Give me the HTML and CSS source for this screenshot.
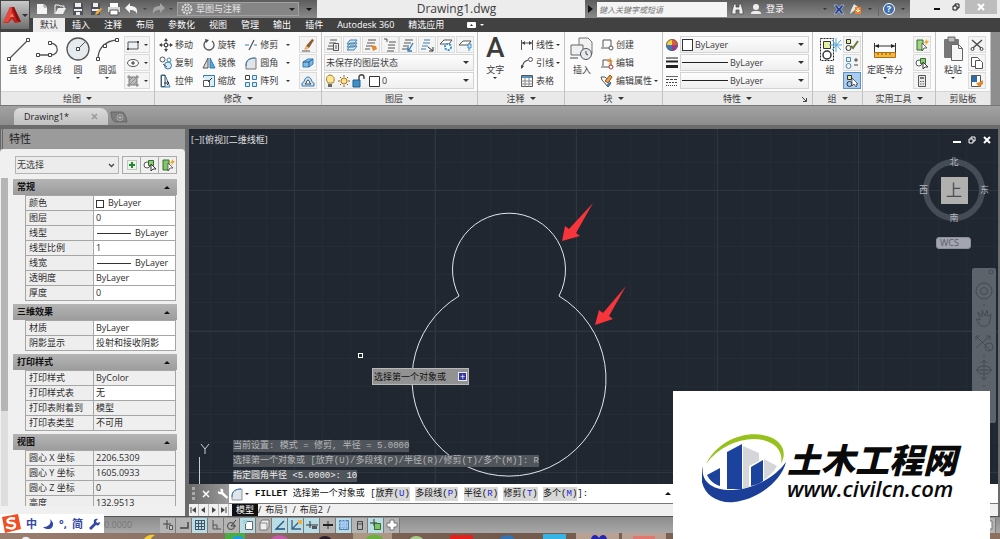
FILE: index.html
```html
<!DOCTYPE html>
<html lang="zh-CN">
<head>
    <meta charset="UTF-8">
    <meta name="viewport" content="width=device-width, initial-scale=1.0">
    <title>Drawing1.dwg</title>
    <link rel="stylesheet" href="styles.css">
</head>
<body>
    <div class="app">
        <header class="header">
            <button class="app-btn" aria-label="应用程序菜单">
                <svg width="20" height="20" viewBox="0 0 20 20"><path d="M1 18L8 2h4l7 15-6 1-3-4-4 4z" fill="#c4211c"/><path d="M8 2L1 18l5-1 3-5 1-10z" fill="#e8473c"/><path d="M10 2l2 0 7 15-4-1z" fill="#8c1210"/><path d="M10 8l2 4H8z" fill="#f08070"/></svg>
                <i class="caret"></i>
            </button>
            <div class="titlebar">
                <div class="quick-access">
                    <button aria-label="新建"><svg width="14" height="14" viewBox="0 0 14 14"><path d="M2 2h7l3 3v7H2z" fill="#f4f4f4"/><path d="M9 2v3h3" fill="none" stroke="#888"/></svg></button>
                    <button aria-label="打开"><svg width="14" height="14" viewBox="0 0 14 14"><path d="M2 12V3h4l1 1h4v2" fill="none" stroke="#f4f4f4"/><path d="M2 12l3-6h8l-3 6z" fill="#eee"/></svg></button>
                    <button aria-label="保存"><svg width="14" height="14" viewBox="0 0 14 14"><path d="M2 1h10v12H2z" fill="#4d5259"/><path d="M4 1h6v4H4zM3 7h8v2H3zM5 10h4v3H5z" fill="#eee"/></svg></button>
                    <button aria-label="另存为"><svg width="14" height="14" viewBox="0 0 14 14"><path d="M2 1h9v12H2z" fill="#4d5259"/><path d="M4 1h5v4H4zM3 7h7v2H3z" fill="#eee"/><path d="M6 13l1-3 5-4 1 1-4 5z" fill="#f1a93b"/></svg></button>
                    <button aria-label="打印"><svg width="14" height="14" viewBox="0 0 14 14"><path d="M3 1h8v4H3z" fill="#fff"/><path d="M1 5h12v5H1z" fill="#d8d8d8"/><path d="M3 8h8v5H3z" fill="#fff" stroke="#555"/></svg></button>
                    <button aria-label="放弃"><svg width="14" height="14" viewBox="0 0 14 14"><path d="M5 1v3c5 0 8 2 7 8-1-3-3-4-7-4v3L0 6z" fill="#f4f4f4"/></svg></button>
                    <i class="caret dim"></i>
                    <button aria-label="重做"><svg width="14" height="14" viewBox="0 0 14 14"><path d="M9 1v3C4 4 1 6 2 12c1-3 3-4 7-4v3l5-5z" fill="#a4a4a4"/></svg></button>
                    <i class="caret dim"></i>
                    <label class="workspace">
                        <svg width="12" height="12" viewBox="0 0 12 12"><circle cx="6" cy="6" r="4.5" fill="none" stroke="#ddd" stroke-width="2" stroke-dasharray="2 1"/><circle cx="6" cy="6" r="2" fill="none" stroke="#eee"/></svg>
                        <select aria-label="工作空间"><option>草图与注释</option></select>
                        <i class="caret"></i>
                    </label>
                    <i class="caret black"></i>
                </div>
                <h1 class="doc-title">Drawing1.dwg</h1>
                <div class="infocenter">
                    <i class="arrow-right"></i>
                    <input type="text" placeholder="键入关键字或短语" aria-label="搜索">
                    <button aria-label="查找"><svg width="13" height="12" viewBox="0 0 13 12"><path d="M3 1h2v3h3V1h2l2 7v3H8V7H5v4H1V8z" fill="#eee" stroke="#444" stroke-width=".7"/></svg></button>
                    <button class="login"><svg width="12" height="12" viewBox="0 0 12 12"><circle cx="6" cy="4" r="3" fill="#eee"/><path d="M1 11c0-3 2-3 5-3s5 0 5 3z" fill="#eee"/></svg>登录</button>
                    <span class="spacer"></span>
                    <i class="caret"></i>
                    <button aria-label="Exchange"><svg width="12" height="11" viewBox="0 0 12 11"><path d="M1 1h3l2 3 2-3h3L8 5.500l3 4.500H8L6 7l-2 3H1l3-4.500z" fill="#27408f" stroke="#c8d4f2" stroke-width=".6"/></svg></button>
                    <button aria-label="脱机"><svg width="13" height="12" viewBox="0 0 13 12"><path d="M5 1l4 3-3 3-5 4 1-4z" fill="#e4e4e4"/><rect x="6" y="4" width="6" height="7" fill="#f07f22"/><path d="M9 5v4M7 7l2 2 2-2" stroke="#fff" fill="none"/></svg></button>
                    <i class="caret"></i>
                    <span class="sep"></span>
                    <button class="help" aria-label="帮助">?</button>
                    <i class="caret"></i>
                </div>
                <div class="window-controls">
                    <button aria-label="最小化"><svg width="8" height="8" viewBox="0 0 8 8"><path d="M1 6h6" stroke="#111" stroke-width="2"/></svg></button>
                    <button aria-label="还原"><svg width="8" height="8" viewBox="0 0 8 8"><path d="M1 3h4v4H1zM3 3V1h4v4H5" fill="none" stroke="#111"/></svg></button>
                    <button class="close" aria-label="关闭"><svg width="8" height="8" viewBox="0 0 8 8"><path d="M1 1l6 6M7 1L1 7" stroke="#fff" stroke-width="2"/></svg></button>
                </div>
            </div>
            <nav class="ribbon-tabs">
                <a href="#" class="active">默认</a>
                <a href="#">插入</a>
                <a href="#">注释</a>
                <a href="#">布局</a>
                <a href="#">参数化</a>
                <a href="#">视图</a>
                <a href="#">管理</a>
                <a href="#">输出</a>
                <a href="#">插件</a>
                <a href="#">Autodesk 360</a>
                <a href="#">精选应用</a>
                <button class="minimize-ribbon" aria-label="最小化功能区"><svg width="9" height="6" viewBox="0 0 9 6"><rect width="9" height="6" rx="1" fill="#fff"/><path d="M3 4l1.500-2L6 4z" fill="#333"/></svg><i class="caret light"></i></button>
            </nav>
        </header>

        <section class="ribbon">
            <div class="panel draw">
                <div class="panel-body">
                    <button class="big"><svg width="26" height="26" viewBox="0 0 26 26"><path d="M4 23L23 4" stroke="#555" stroke-width="1.300"/><path d="M2.500 21.500h3v3h-3zM21.500 2.500h3v3h-3z" fill="#fff" stroke="#444"/></svg>直线</button>
                    <button class="big"><svg width="26" height="26" viewBox="0 0 26 26"><path d="M3 19h13c8 0 9-11-1-12" fill="none" stroke="#555" stroke-width="1.300"/><path d="M1.500 17.500h3v3h-3zM13.500 17.500h3v3h-3zM13.500 5.500h3v3h-3z" fill="#fff" stroke="#444"/></svg>多段线</button>
                    <button class="big"><svg width="26" height="26" viewBox="0 0 26 26"><circle cx="13" cy="13" r="11" fill="#e4eaee" stroke="#555" stroke-width="1.300"/><path d="M13 13l7-7" stroke="#555"/><path d="M11.500 11.500h3v3h-3z" fill="#fff" stroke="#444"/></svg>圆<i class="caret"></i></button>
                    <button class="big"><svg width="26" height="26" viewBox="0 0 26 26"><path d="M4 23C4 12 11 5 23 4" fill="none" stroke="#555" stroke-width="1.300"/><path d="M2.500 21.500h3v3h-3zM9.500 8.500h3v3h-3zM21.500 2.500h3v3h-3z" fill="#fff" stroke="#444"/></svg>圆弧<i class="caret"></i></button>
                    <div class="stack">
                        <button class="boxed" aria-label="矩形"><svg width="14" height="14" viewBox="0 0 14 14"><path d="M2 4h10v7H2z" fill="#eef1f3" stroke="#555"/><path d="M1 10h2v2H1zM11 3h2v2h-2z" fill="#444"/></svg><i class="caret"></i></button>
                        <button class="boxed" aria-label="椭圆"><svg width="14" height="14" viewBox="0 0 14 14"><ellipse cx="7" cy="7" rx="5.500" ry="3.500" fill="#fff" stroke="#555"/><path d="M7 5v4M5 7h4" stroke="#333"/></svg><i class="caret"></i></button>
                        <button class="boxed" aria-label="图案填充"><svg width="14" height="14" viewBox="0 0 14 14"><path d="M3 3h8v8H3z" fill="#bbb"/><path d="M3 1v12M11 1v12M1 3h12M1 11h12" stroke="#666" stroke-width=".8"/><path d="M3 7l4-4M3 11l8-8M7 11l4-4" stroke="#888" stroke-width=".8"/></svg><i class="caret"></i></button>
                    </div>
                </div>
                <h2 class="panel-title">绘图<i class="caret"></i></h2>
            </div>

            <div class="panel modify">
                <div class="panel-body">
                    <div class="stack">
                        <button><svg width="14" height="14" viewBox="0 0 14 14"><path d="M7 1v12M1 7h12" stroke="#555"/><path d="M7 0l2 3H5zM7 14l2-3H5zM0 7l3-2v4zM14 7l-3-2v4z" fill="#444"/><path d="M5.500 5.500h3v3h-3z" fill="#fff" stroke="#444"/></svg>移动</button>
                        <button><svg width="14" height="14" viewBox="0 0 14 14"><circle cx="3.500" cy="3.500" r="2.500" fill="none" stroke="#555"/><circle cx="10" cy="4" r="2" fill="none" stroke="#3f86bb"/><circle cx="9" cy="9.500" r="3.500" fill="#dcecf7" stroke="#2f7cb6"/><path d="M4 8l4 3" stroke="#444"/></svg>复制</button>
                        <button><svg width="14" height="14" viewBox="0 0 14 14"><path d="M2 1h4l5 12H2z" fill="#d8ebf7" stroke="#2f7cb6"/><path d="M2.500 1.500H6v11H2.500z" fill="#fff" stroke="#555"/><path d="M5 9h4M8 7l2 2-2 2" stroke="#333" fill="none"/></svg>拉伸</button>
                    </div>
                    <div class="stack">
                        <button><svg width="14" height="14" viewBox="0 0 14 14"><path d="M4 3a5 5 0 1 0 6 0" fill="none" stroke="#555" stroke-width="1.300"/><path d="M3 1l4 1-3 3z" fill="#444"/></svg>旋转</button>
                        <button><svg width="14" height="14" viewBox="0 0 14 14"><path d="M6 2v10H1z" fill="#ddd" stroke="#555"/><path d="M8 2v10h5z" fill="#5ca5d6" stroke="#2f7cb6"/></svg>镜像</button>
                        <button><svg width="14" height="14" viewBox="0 0 14 14"><path d="M1.500 3.500v-2h11v11h-4" fill="#dcecf7" stroke="#2f7cb6"/><path d="M1.500 6.500h6v6h-6z" fill="#fff" stroke="#555"/><path d="M6 8l4-4" stroke="#333"/></svg>缩放</button>
                    </div>
                    <div class="stack">
                        <button><svg width="14" height="14" viewBox="0 0 14 14"><path d="M1 7h4M10 7h3" stroke="#2f7cb6"/><path d="M5 12L10 2" stroke="#555" stroke-width="1.300"/></svg>修剪<i class="caret"></i></button>
                        <button><svg width="14" height="14" viewBox="0 0 14 14"><path d="M2 13V9c0-5 3-7 10-7v11z" fill="#dfe5e9" stroke="#777"/><path d="M2 10c0-6 4-8 9-8" fill="none" stroke="#2f7cb6"/></svg>圆角<i class="caret"></i></button>
                        <button><svg width="14" height="14" viewBox="0 0 14 14"><path d="M1.500 1.500h4v4h-4z" fill="#fff" stroke="#444"/><path d="M8.500 1.500h4v4h-4zM1.500 8.500h4v4h-4zM8.500 8.500h4v4h-4z" fill="#dcecf7" stroke="#2f7cb6"/></svg>阵列<i class="caret"></i></button>
                    </div>
                    <div class="stack">
                        <button class="boxed" aria-label="删除"><svg width="14" height="14" viewBox="0 0 14 14"><path d="M5 8l6-7 2 1-5 8z" fill="#8f5a2c"/><path d="M5 8l3 2-3 2-2-1z" fill="#f0b070"/><path d="M1 13h8" stroke="#555"/></svg></button>
                        <button class="boxed" aria-label="分解"><svg width="14" height="14" viewBox="0 0 14 14"><path d="M2 6l5-3h5v5l-4 3H2z" fill="#7fbbe3" stroke="#2f7cb6"/><path d="M2 6h6v5M8 6l4-3" fill="none" stroke="#1d5f96"/></svg></button>
                        <button class="boxed" aria-label="偏移"><svg width="14" height="14" viewBox="0 0 14 14"><path d="M1 12V9c3 0 2-6 6-6s3 6 6 6v3z" fill="#cfe4f3" stroke="#2f7cb6"/><path d="M4 10c2 0 1-4 3-4s1 4 3 4z" fill="#fff" stroke="#444"/></svg></button>
                    </div>
                </div>
                <h2 class="panel-title">修改<i class="caret"></i></h2>
            </div>

            <div class="panel layers">
                <div class="panel-body column">
                    <div class="tool-row">
                        <button class="boxed" aria-label="图层特性"><svg width="14" height="14" viewBox="0 0 14 14"><path d="M4 2h7M3 5h7M2 8h5M1 11h6" stroke="#555"/><path d="M7.500 5.500h5v7h-5z" fill="#eee" stroke="#555"/><path d="M9 8h2M9 10h2" stroke="#555"/></svg></button>
                        <button class="boxed" aria-label="隔离"><svg width="14" height="14" viewBox="0 0 14 14"><path d="M2 6l3-4h7l-3 4zM2 9l3-4h7l-3 4zM2 12l3-4h7l-3 4z" fill="#d7e9f5" stroke="#3c7fae"/></svg></button>
                        <button class="boxed" aria-label="匹配"><svg width="14" height="14" viewBox="0 0 14 14"><path d="M4 2h8M3 5h8M2 8h6M1 11h5" stroke="#555"/><path d="M7 7l5 1 1 3-4 2z" fill="#e08a2c"/></svg></button>
                        <button class="boxed" aria-label="上一个"><svg width="14" height="14" viewBox="0 0 14 14"><path d="M1 1h3v3M6 4h7M5 7h7M5 10h7M4 13h7" fill="none" stroke="#555"/></svg></button>
                        <button class="boxed" aria-label="置为当前"><svg width="14" height="14" viewBox="0 0 14 14"><path d="M4 2h8M3 5h7M2 8h6M1 11h6" stroke="#555"/><path d="M12 5l-4 7M7 9v4h4" fill="none" stroke="#2f7cb6" stroke-width="1.300"/></svg></button>
                        <button class="boxed" aria-label="更改为当前图层"><svg width="14" height="14" viewBox="0 0 14 14"><path d="M4 2h6M3 5h7M2 8h6M1 11h5" stroke="#3c7fae"/><path d="M8 9l5 4M13 9v4H9" fill="none" stroke="#333"/></svg></button>
                        <button class="boxed" aria-label="冻结"><svg width="14" height="14" viewBox="0 0 14 14"><path d="M1 6l4-4h8l-3 4z" fill="#fff" stroke="#555"/><circle cx="9" cy="9" r="3" fill="#fff" stroke="#3c8fc8" stroke-width="2" stroke-dasharray="2 1"/></svg></button>
                        <button class="boxed" aria-label="关闭图层"><svg width="14" height="14" viewBox="0 0 14 14"><path d="M1 7l4-4h8l-3 4z" fill="#fff" stroke="#555"/><path d="M10 6h3v4h-3zM11 10v3" fill="#cfe5f4" stroke="#3c8fc8"/></svg></button>
                    </div>
                    <label class="combo"><select aria-label="图层状态"><option>未保存的图层状态</option></select><i class="caret"></i></label>
                    <label class="combo">
                        <svg width="54" height="14" viewBox="3 0 54 14"><path d="M5 9C2 5 4 1 7 1s6 4 3 8z" fill="#ffe79a" stroke="#a0802c"/><path d="M5 10h4v3H5z" fill="#666"/><circle cx="21" cy="7" r="3" fill="#ffe08a" stroke="#a9771d"/><path d="M21 1v2M21 11v2M15 7h2M25 7h2M17 3l1 1M24 10l1 1M25 3l-1 1M17 11l1-1" stroke="#80602a"/><path d="M30 6h7v7h-7z" fill="#3f8fca" stroke="#20608f"/><path d="M36 6V3c0-3 5-3 5 0v2" fill="none" stroke="#444" stroke-width="1.400"/><path d="M46.500 2.500h10v10h-10z" fill="#fff" stroke="#333"/></svg>
                        <select aria-label="当前图层"><option>0</option></select><i class="caret"></i>
                    </label>
                </div>
                <h2 class="panel-title">图层<i class="caret"></i></h2>
            </div>

            <div class="panel annotate">
                <div class="panel-body">
                    <button class="big"><span class="letter">A</span>文字<i class="caret"></i></button>
                    <div class="stack">
                        <button><svg width="14" height="14" viewBox="0 0 14 14"><path d="M1.500 2v10M12.500 2v10M2 5h10" stroke="#555"/><path d="M2 5l3-2v4zM12 5l-3-2v4z" fill="#444"/></svg>线性<i class="caret"></i></button>
                        <button><svg width="14" height="14" viewBox="0 0 14 14"><path d="M2 12C3 6 5 5 8 4" fill="none" stroke="#555" stroke-width="1.300"/><path d="M1 13V9l3 1z" fill="#444"/><circle cx="10.500" cy="3.500" r="2" fill="#fff" stroke="#555"/></svg>引线<i class="caret"></i></button>
                        <button><svg width="14" height="14" viewBox="0 0 14 14"><path d="M1.500 1.500h11v11h-11z" fill="#fff" stroke="#555"/><path d="M2 2h10v2H2z" fill="#5a93bd"/><path d="M1 7h12M1 10h12M5 4v9M9 4v9" stroke="#888"/></svg>表格</button>
                    </div>
                </div>
                <h2 class="panel-title">注释<i class="caret"></i></h2>
            </div>

            <div class="panel block">
                <div class="panel-body">
                    <button class="big"><svg width="26" height="26" viewBox="0 0 26 26"><path d="M10 2h9l4 4v12H10z" fill="#f2f2f2" stroke="#777"/><path d="M2 9h12v10H2z" fill="#eef0f2" stroke="#666"/><circle cx="17" cy="18" r="5.500" fill="#e3e9ed" stroke="#555"/><path d="M17 18v-3M17 18l2 1M1 22h8" stroke="#444"/></svg>插入</button>
                    <div class="stack">
                        <button><svg width="14" height="14" viewBox="0 0 14 14"><path d="M3 9V2h8v5M1 10h9M11 7v5" fill="none" stroke="#555"/><circle cx="11" cy="10" r="2" fill="#fff" stroke="#555"/></svg>创建</button>
                        <button><svg width="14" height="14" viewBox="0 0 14 14"><path d="M3 10V4h8v6M1 11h8" fill="none" stroke="#555"/><circle cx="11" cy="11" r="2" fill="#fff" stroke="#a33"/><path d="M11 1L7 6h3L8 10l5-5h-3z" fill="#f0912c"/></svg>编辑</button>
                        <button><svg width="14" height="14" viewBox="0 0 14 14"><path d="M1 3h4l6 6-3 4-6-7z" fill="#fff" stroke="#555"/><path d="M5 7l5-6 2 2-4 6z" fill="#e8a04a" stroke="#95551d"/><path d="M7 12l3-3" stroke="#2f7cb6" stroke-width="2"/></svg>编辑属性<i class="caret"></i></button>
                    </div>
                </div>
                <h2 class="panel-title">块<i class="caret"></i></h2>
            </div>

            <div class="panel properties">
                <div class="panel-body column">
                    <div class="prop-row">
                        <svg width="14" height="14" viewBox="0 0 14 14"><path d="M7 7V1a6 6 0 0 1 6 6z" fill="#e35b31"/><path d="M7 7V1a6 6 0 0 0-6 6z" fill="#f4d03c"/><path d="M7 7h6a6 6 0 0 1-6 6z" fill="#a2398f"/><path d="M7 7H1a6 6 0 0 0 6 6z" fill="#3b78b8"/><circle cx="7" cy="7" r="5.500" fill="none" stroke="#666"/></svg>
                        <label class="combo"><span class="swatch"></span><select aria-label="对象颜色"><option>ByLayer</option></select><i class="caret"></i></label>
                    </div>
                    <div class="prop-row">
                        <svg width="14" height="14" viewBox="0 0 14 14"><path d="M1 2h12" stroke="#222"/><path d="M1 5.500h12" stroke="#222" stroke-width="2"/><path d="M1 10.500h12" stroke="#222" stroke-width="3"/></svg>
                        <label class="combo"><span class="line-sample"></span><select aria-label="线宽"><option>ByLayer</option></select><i class="caret"></i></label>
                    </div>
                    <div class="prop-row">
                        <svg width="14" height="14" viewBox="0 0 14 14"><path d="M1 2.500h12" stroke="#666"/><path d="M1 5.500h12" stroke="#444" stroke-dasharray="3 1"/><path d="M1 8.500h12" stroke="#444" stroke-dasharray="2 1"/><path d="M1 11.500h12" stroke="#444" stroke-dasharray="1 1"/></svg>
                        <label class="combo"><span class="line-sample"></span><select aria-label="线型"><option>ByLayer</option></select><i class="caret"></i></label>
                    </div>
                </div>
                <h2 class="panel-title">特性<i class="caret"></i><svg class="launcher" width="5" height="5" viewBox="0 0 5 5"><path d="M0 0l4 4M4.500 1v3.500H1" fill="none" stroke="#444"/></svg></h2>
            </div>

            <div class="panel group">
                <div class="panel-body">
                    <button class="big"><svg width="26" height="26" viewBox="0 0 26 26"><path d="M3.500 2.500h13v22h-13z" fill="none" stroke="#222" stroke-dasharray="2 1"/><path d="M6.500 5.500h7v7h-7z" fill="#e6ef9e" stroke="#333"/><circle cx="10" cy="19" r="4" fill="#fff" stroke="#333" stroke-width="1.500"/><path d="M19 2v14M12 9h13M15 4l9 10M24 4l-9 10" stroke="#55a6dc"/></svg>组</button>
                    <div class="stack">
                        <button class="boxed" aria-label="解除编组"><svg width="14" height="14" viewBox="0 0 14 14"><path d="M1.500 1.500h4v4h-4z" fill="#e6ef9e" stroke="#333"/><circle cx="3.500" cy="10" r="2.500" fill="none" stroke="#333"/><path d="M6 8l2 2 5-7" fill="none" stroke="#6b7a35" stroke-width="2"/></svg></button>
                        <button class="boxed" aria-label="组编辑"><svg width="14" height="14" viewBox="0 0 14 14"><path d="M1.500 1.500h4v4h-4z" fill="#e8f2f9" stroke="#4a87ad"/><circle cx="3.500" cy="10" r="2.500" fill="none" stroke="#4a87ad"/><path d="M9 4h4M11 2v4M9 9h4" stroke="#444"/></svg></button>
                        <button class="boxed pressed" aria-label="启用组选择"><svg width="14" height="14" viewBox="0 0 14 14"><path d="M2.500 1.500h4v4h-4z" fill="#e6ef9e" stroke="#333"/><circle cx="4.500" cy="10" r="2.500" fill="none" stroke="#333"/><path d="M7 4v8l2-2 2 3 1-1-1-2h2z" fill="#fff" stroke="#333" stroke-width=".7"/></svg></button>
                    </div>
                </div>
                <h2 class="panel-title">组<i class="caret"></i></h2>
            </div>

            <div class="panel utilities">
                <div class="panel-body">
                    <button class="big"><svg width="26" height="26" viewBox="0 0 26 26"><path d="M2.500 7v10M23.500 7v10M3 10h20" stroke="#333"/><path d="M3 10l4-2v4zM23 10l-4-2v4z" fill="#222"/><path d="M2.500 16.500h21v5h-21z" fill="#f4b73c" stroke="#a86f16"/><path d="M6 17v2M10 17v2M14 17v2M18 17v2" stroke="#805010"/></svg>定距等分<i class="caret"></i></button>
                    <div class="stack">
                        <button class="boxed" aria-label="快速选择"><svg width="14" height="14" viewBox="0 0 14 14"><path d="M2 2h6v10H2z" fill="#a4d38a" stroke="#347128"/><path d="M7 5l5 5H9l-2 3z" fill="#fff" stroke="#333" stroke-width=".7"/><path d="M12 1L9 5h2l-1 3 4-5h-2z" fill="#f0a82c"/></svg></button>
                        <button class="boxed" aria-label="全部选择"><svg width="14" height="14" viewBox="0 0 14 14"><circle cx="4" cy="7" r="3" fill="#fff" stroke="#555"/><path d="M5.500 2.500h5v5h-5z" fill="#8fca7a" stroke="#347128"/><path d="M8 6v7l2-2 3 0z" fill="#fff" stroke="#333"/></svg></button>
                        <button class="boxed" aria-label="快速计算器"><svg width="14" height="14" viewBox="0 0 14 14"><path d="M3.500 1.500h7v11h-7z" fill="#e8e8e8" stroke="#555"/><path d="M5 3h4v2H5z" fill="#777"/><path d="M5 7.500h4M5 10h4" stroke="#666" stroke-dasharray="1 .5"/></svg></button>
                    </div>
                </div>
                <h2 class="panel-title">实用工具<i class="caret"></i></h2>
            </div>

            <div class="panel clipboard">
                <div class="panel-body">
                    <button class="big"><svg width="26" height="26" viewBox="0 0 26 26"><rect x="4" y="3" width="15" height="19" rx="1" fill="#777"/><path d="M8 1h7v5H8z" fill="#bbb" stroke="#666"/><path d="M11.500 8.500h7l4 4v12h-11z" fill="#f6f6f6" stroke="#666"/><path d="M18.500 8.500v4h4" fill="none" stroke="#666"/></svg>粘贴<i class="caret"></i></button>
                    <div class="stack">
                        <button class="boxed" aria-label="剪切"><svg width="14" height="14" viewBox="0 0 14 14"><path d="M2 2l9 8M12 2L3 10" stroke="#444" stroke-width="1.300"/><circle cx="2.500" cy="11" r="1.500" fill="none" stroke="#444"/><circle cx="11.500" cy="11" r="1.500" fill="none" stroke="#444"/></svg></button>
                        <button class="boxed" aria-label="复制剪裁"><svg width="14" height="14" viewBox="0 0 14 14"><path d="M1.500 1.500h6l2 2v7h-8z" fill="#fff" stroke="#555"/><path d="M5.500 4.500h5l2 2v6h-7z" fill="#fff" stroke="#555"/></svg></button>
                        <button class="boxed" aria-label="特性匹配"><svg width="14" height="14" viewBox="0 0 14 14"><path d="M1.500 1.500h9v11h-9z" fill="#fff" stroke="#555"/><path d="M2 2h5v6H2z" fill="#2d6ba8"/><path d="M6 9l4-1 3-2v4l-4 3z" fill="#e08a2c"/></svg></button>
                    </div>
                </div>
                <h2 class="panel-title">剪贴板</h2>
            </div>
        </section>

        <nav class="file-tabs">
            <a href="#" class="file-tab"><span>Drawing1*</span><svg width="7" height="7" viewBox="0 0 7 7"><path d="M1 1l5 5M6 1L1 6" stroke="#999" stroke-width="1.500"/></svg></a>
            <button class="new-tab" aria-label="新图形"><svg width="18" height="12" viewBox="0 0 18 12"><path d="M1 1h11q3 0 5 10H6C3 11 1 6 1 1z" fill="#7c7c7c" stroke="#666"/><circle cx="10" cy="6.500" r="3" fill="none" stroke="#aaa"/><path d="M10 5v3M8.500 6.500h3" stroke="#bbb"/></svg></button>
        </nav>

        <main class="workspace-area">
            <aside class="palette">
                <h2 class="palette-title">特性</h2>
                <div class="palette-body">
                    <div class="palette-scroll"></div>
                    <div class="palette-content">
                        <div class="selector">
                            <label class="selection"><select aria-label="选择"><option>无选择</option></select><svg width="7" height="5" viewBox="0 0 7 5"><path d="M1 1l2.500 2.500L6 1" fill="none" stroke="#444" stroke-width="1.300"/></svg></label>
                            <button aria-label="切换 PICKADD"><svg width="14" height="14" viewBox="0 0 14 14"><path d="M2.500 2.500h9v9h-9z" fill="#e9f5e5" stroke="#999" stroke-dasharray="1 1"/><path d="M7 4v6M4 7h6" stroke="#1d8b35" stroke-width="2"/></svg></button>
                            <button aria-label="选择对象"><svg width="14" height="14" viewBox="0 0 14 14"><circle cx="4" cy="7" r="3" fill="#fff" stroke="#555"/><path d="M5.500 2.500h5v5h-5z" fill="#8fca7a" stroke="#347128"/><path d="M8 6v7l2-2 3 0z" fill="#fff" stroke="#333"/></svg></button>
                            <button aria-label="快速选择"><svg width="14" height="14" viewBox="0 0 14 14"><path d="M2 2h6v10H2z" fill="#84c46c" stroke="#347128"/><path d="M7 5l5 5H9l-2 3z" fill="#fff" stroke="#333" stroke-width=".7"/><path d="M12 1L9 5h2l-1 3 4-5h-2z" fill="#f0a82c"/></svg></button>
                        </div>
                        <section class="category">
                            <h3>常规<i class="caret-up"></i></h3>
                            <table>
                                <tr><th>颜色</th><td><span class="mini-swatch"></span>ByLayer</td></tr>
                                <tr><th>图层</th><td>0</td></tr>
                                <tr><th>线型</th><td><span class="mini-line"></span>ByLayer</td></tr>
                                <tr><th>线型比例</th><td>1</td></tr>
                                <tr><th>线宽</th><td><span class="mini-line"></span>ByLayer</td></tr>
                                <tr><th>透明度</th><td>ByLayer</td></tr>
                                <tr><th>厚度</th><td>0</td></tr>
                            </table>
                        </section>
                        <section class="category">
                            <h3>三维效果<i class="caret-up"></i></h3>
                            <table>
                                <tr><th>材质</th><td>ByLayer</td></tr>
                                <tr><th>阴影显示</th><td>投射和接收阴影</td></tr>
                            </table>
                        </section>
                        <section class="category">
                            <h3>打印样式<i class="caret-up"></i></h3>
                            <table>
                                <tr><th>打印样式</th><td class="readonly">ByColor</td></tr>
                                <tr><th>打印样式表</th><td>无</td></tr>
                                <tr><th>打印表附着到</th><td class="readonly">模型</td></tr>
                                <tr><th>打印表类型</th><td class="readonly">不可用</td></tr>
                            </table>
                        </section>
                        <section class="category">
                            <h3>视图<i class="caret-up"></i></h3>
                            <table>
                                <tr><th>圆心 X 坐标</th><td class="readonly">2206.5309</td></tr>
                                <tr><th>圆心 Y 坐标</th><td class="readonly">1605.0933</td></tr>
                                <tr><th>圆心 Z 坐标</th><td class="readonly">0</td></tr>
                                <tr><th>高度</th><td class="readonly">132.9513</td></tr>
                            </table>
                        </section>
                    </div>
                </div>
            </aside>

            <div class="drawing-window">
                <div class="canvas">
                    <svg class="drawing" width="809" height="355" viewBox="0 0 809 355">
                        <path d="M270 167A56.500 56.500 0 1 1 370 167A97 97 0 1 1 270 167Z" fill="none" stroke="#e4e6e8"/>
                        <path d="M373 112l3-15 4 3 24-26-17 30 4 3z" fill="#f8353a"/>
                        <path d="M406 196l4-15 4 3 23-27-17 30 4 3z" fill="#f8353a"/>
                        <rect x="169.500" y="224.500" width="4" height="4" fill="none" stroke="#fff"/>
                        <path d="M12 315l4 5 4-5M16 320v5M10.500 328v27" fill="none" stroke="#ccc"/>
                    </svg>
                    <div class="view-label">[−][俯视][二维线框]</div>
                    <div class="doc-controls">
                        <button aria-label="最小化"><svg width="8" height="8" viewBox="0 0 8 8"><path d="M0 6h8" stroke="#fff" stroke-width="2"/></svg></button>
                        <button aria-label="还原"><svg width="8" height="8" viewBox="0 0 8 8"><path d="M1 3h4v4H1zM3 3V1h4v4H5" fill="none" stroke="#fff"/></svg></button>
                        <button aria-label="关闭"><svg width="8" height="8" viewBox="0 0 8 8"><path d="M1 1l6 6M7 1L1 7" stroke="#fff" stroke-width="2"/></svg></button>
                    </div>
                    <div class="viewcube">
                        <span class="north">北</span>
                        <span class="west">西</span>
                        <span class="top">上</span>
                        <span class="east">东</span>
                        <span class="south">南</span>
                    </div>
                    <button class="wcs">WCS</button>
                    <div class="navbar">
                        <svg width="24" height="130" viewBox="0 0 24 130" fill="none" stroke="#434a52"><circle cx="19" cy="4" r="2"/><circle cx="12" cy="23" r="8"/><circle cx="12" cy="23" r="3.500"/><path d="M7 56l-3-5 4 1-2-8 4 5 0-7 3 6 2-6 1 7 3-3-1 7c-1 6-8 7-11 3zM4 68l14 14M18 68L4 80M4 72v-4h4M14 68h4v4"/><circle cx="17" cy="79" r="4"/><path d="M12 92v20M4 102h16M9 95l3-3 3 3M9 109l3 3 3-3"/><ellipse cx="12" cy="102" rx="7" ry="4"/><path d="M11 37h2M11 88h2M11 118h2"/></svg>
                    </div>
                    <div class="dyn-prompt">选择第一个对象或<span class="down-key">+</span></div>
                    <div class="history">
                        <p><span>当前设置: 模式 = 修剪, 半径 = 5.0000</span></p>
                        <p><span>选择第一个对象或 [放弃(U)/多段线(P)/半径(R)/修剪(T)/多个(M)]: R</span></p>
                        <p><span class="latest">指定圆角半径 &lt;5.0000&gt;: 10</span></p>
                    </div>
                </div>
                <div class="command-line">
                    <div class="command-tools">
                        <span class="grip"></span>
                        <button aria-label="关闭"><svg width="8" height="8" viewBox="0 0 8 8"><path d="M1 1l6 6M7 1L1 7" stroke="#fff" stroke-width="1.500"/></svg></button>
                        <button aria-label="自定义"><svg width="11" height="11" viewBox="0 0 11 11"><path d="M1 3l2 1 1-1-1-2c3-1 4 1 3 3l5 5-1 2-6-5c-2 1-4-1-3-3z" fill="#fff"/></svg></button>
                    </div>
                    <svg width="14" height="14" viewBox="0 0 14 14"><path d="M2 13V9c0-5 3-7 10-7v11z" fill="#dfe5e9" stroke="#8a97a2"/><path d="M2 10c0-6 4-8 9-8" fill="none" stroke="#2f7cb6"/></svg>
                    <i class="caret"></i>
                    <div class="prompt"><b>FILLET</b> 选择第一个对象或 [<button>放弃(<em>U</em>)</button> <button>多段线(<em>P</em>)</button> <button>半径(<em>R</em>)</button> <button>修剪(<em>T</em>)</button> <button>多个(<em>M</em>)</button>]:</div>
                    <button class="expand" aria-label="展开"><i class="caret-up"></i></button>
                </div>
                <div class="layout-tabs">
                    <button class="step" aria-label="第一个"><svg width="7" height="8" viewBox="0 0 7 8"><path d="M1 1v6" stroke="#444"/><path d="M6 1v6L2 4z" fill="#444"/></svg></button>
                    <button class="step" aria-label="上一个"><svg width="7" height="8" viewBox="0 0 7 8"><path d="M5 1v6L1 4z" fill="#444"/></svg></button>
                    <button class="step" aria-label="下一个"><svg width="7" height="8" viewBox="0 0 7 8"><path d="M2 1v6l4-3z" fill="#444"/></svg></button>
                    <button class="step" aria-label="最后一个"><svg width="7" height="8" viewBox="0 0 7 8"><path d="M6 1v6" stroke="#444"/><path d="M1 1v6l4-3z" fill="#444"/></svg></button>
                    <a href="#" class="active">模型</a><span>/</span>
                    <a href="#">布局1</a><span>/</span>
                    <a href="#">布局2</a><span>/</span>
                </div>
            </div>
        </main>

        <footer class="status-bar">
            <span class="coords">0.0000</span>
            <button aria-label="推断约束"><svg width="12" height="12" viewBox="0 0 12 12"><path d="M5 1v9M1 5h8" stroke="#444"/><path d="M7.500 6.500h3v4h-3z" fill="#ccc" stroke="#555"/></svg></button>
            <button aria-label="捕捉"><svg width="12" height="12" viewBox="0 0 12 12"><path d="M2 9h8V3" fill="none" stroke="#444" stroke-width="1.500"/></svg></button>
            <button class="on" aria-label="栅格"><svg width="12" height="12" viewBox="0 0 12 12"><path d="M1.500 1v10M4.500 1v10M7.500 1v10M10.500 1v10M1 1.500h10M1 4.500h10M1 7.500h10M1 10.500h10" stroke="#456"/></svg></button>
            <button aria-label="正交"><svg width="12" height="12" viewBox="0 0 12 12"><path d="M3 1v9h8M3 6h4v4" fill="none" stroke="#555"/></svg></button>
            <button aria-label="极轴"><svg width="12" height="12" viewBox="0 0 12 12"><circle cx="5" cy="7" r="3.500" fill="none" stroke="#444"/><path d="M5 7l5-6M5 7h5" stroke="#444"/></svg></button>
            <button class="on" aria-label="对象捕捉"><svg width="12" height="12" viewBox="0 0 12 12"><path d="M3.500 2.500h7v8h-7z" fill="#fff" stroke="#666"/><path d="M1 1h4v4H1z" fill="#9fd0dd"/></svg></button>
            <button aria-label="三维对象捕捉"><svg width="12" height="12" viewBox="0 0 12 12"><path d="M2 4l2-3h7v7l-2 3H2z" fill="#eee" stroke="#777"/><path d="M2 4h7v7" fill="none" stroke="#888"/></svg></button>
            <button class="on" aria-label="对象追踪"><svg width="12" height="12" viewBox="0 0 12 12"><path d="M10 2L2 10h9" fill="none" stroke="#234e78" stroke-width="1.300"/></svg></button>
            <button class="on" aria-label="动态 UCS"><svg width="12" height="12" viewBox="0 0 12 12"><path d="M2 1v9h9M2 10l7-7" fill="none" stroke="#355f86" stroke-width="1.300"/><path d="M8 1h4v4H8z" fill="#e7b344"/></svg></button>
            <button class="on" aria-label="动态输入"><svg width="12" height="12" viewBox="0 0 12 12"><path d="M4 2v7M0 6h12" stroke="#333"/><path d="M6 7h5v3H6z" fill="#556"/></svg></button>
            <button aria-label="线宽"><svg width="12" height="12" viewBox="0 0 12 12"><path d="M6 2v8" stroke="#333"/><path d="M1 6h10" stroke="#222" stroke-width="2"/></svg></button>
            <button class="on" aria-label="透明度"><svg width="12" height="12" viewBox="0 0 12 12"><path d="M1.500 1.500h9v9h-9z" fill="#8bb9e6" stroke="#5480ac"/><path d="M1 4h10M1 7h10M4 1v10M7 1v10" stroke="#cde2f5" stroke-dasharray="1 1"/></svg></button>
            <button aria-label="快捷特性"><svg width="12" height="12" viewBox="0 0 12 12"><path d="M3.500 2.500h5v8h-5z" fill="none" stroke="#444"/><path d="M4 5h4" stroke="#444"/></svg></button>
            <button class="on" aria-label="选择循环"><svg width="12" height="12" viewBox="0 0 12 12"><path d="M4 0v7M0 4h7" stroke="#333"/><path d="M4.500 4.500h6v6h-6z" fill="#7fc06b" stroke="#347128"/></svg></button>
            <button aria-label="注释监视器"><svg width="12" height="12" viewBox="0 0 12 12"><path d="M4 1h4v3h3v4H8v3H4V8H1V4h3z" fill="#fff" stroke="#777"/></svg></button>
            <span class="spacer"></span>
            <button class="clean-screen" aria-label="全屏显示"><svg width="10" height="10" viewBox="0 0 10 10"><path d="M1 1h8v8H1z" fill="#fff" stroke="#777"/></svg></button>
        </footer>

        <div class="taskbar">
            <svg width="673" height="6" viewBox="0 0 673 6">
                <path d="M22 6c1-3 6-3 8 0z" fill="#eee"/><path d="M144 6c2-3 6-5 11-4-3 2-4 3-4 4z" fill="#f2cd2e"/><path d="M225 0h20v6h-20z" fill="#49ad43"/><path d="M232 6c2-4 10-4 12 0z" fill="#1c9ae8"/><path d="M271 6c2-4 12-6 17 0z" fill="#c45aa8"/><path d="M319 6c2-4 10-4 12 0z" fill="#2b1c2c"/><path d="M353 0h39v6h-39z" fill="#ab9784"/><path d="M366 6c2-5 14-6 17 0z" fill="#69b13c"/><path d="M410 6c2-4 10-4 13 0z" fill="#a5cd89"/><path d="M450 2h23v4h-23z" fill="#e5201c"/><path d="M500 6c2-5 12-5 15 0z" fill="#3274b8"/><path d="M543 1h23v5h-23z" fill="#36b4e4"/><path d="M576 0h43v6h-43zM622 0h44v6h-44z" fill="#b8a192"/><path d="M591 6c1-5 6-5 8-1 2-4 7-4 8 1z" fill="#2525b5"/><path d="M633 3h22v3h-22z" fill="#e27772"/>
            </svg>
        </div>
    </div>

    <div class="ime-bar">
        <svg width="20" height="19" viewBox="0 0 20 19"><path d="M1 3l16-3 3 15-16 4z" fill="#f04f23"/><path d="M14 5C9 3 5 6 7 8s8 0 7 4-7 2-9 1" fill="none" stroke="#fff" stroke-width="2.500"/></svg>
        <span>中</span>
        <svg width="12" height="12" viewBox="0 0 12 12"><path d="M8 1c2 5-2 8-7 8 4 4 11 2 10-4-1-2-2-3-3-4z" fill="#3448a4"/></svg>
        <span>°,</span>
        <span>简</span>
        <svg width="12" height="12" viewBox="0 0 12 12"><path d="M1 10l5-5c-1-3 1-5 4-4L8 3l1 2 3-1c0 3-2 4-4 3l-5 5z" fill="#3448a4"/></svg>
    </div>

    <div class="brand">
        <svg width="84" height="70" viewBox="0 0 84 70">
            <path d="M4 30C16 6 44-4 65 2c14 4 21 15 14 28 2-11-3-20-18-24C42 2 18 11 4 30z" fill="#97c21d"/>
            <path d="M1 32C-2 48 12 57 31 56c24-2 43-14 53-28C80 46 56 66 32 68 10 70-6 54 1 32z" fill="#1b3f98"/>
            <path d="M5 41l13-7v18C12 50 8 47 5 41zM25 18l15-8v45H25zM49 33l12-7v21c-4 3-8 4-12 5z" fill="#1b429c"/>
            <path d="M41 12l16 7v8l-10 5v21l-6 2zM62 25l13 7c-3 6-8 10-13 14z" fill="#d4d6da"/>
        </svg>
        <div class="brand-text">
            <strong>土木工程网</strong>
            <span>www.civilcn.com</span>
        </div>
    </div>
</body>
</html>
```
FILE: styles.css
```css
* {
    box-sizing: border-box;
}
body {
    margin: 0;
    font-family: "Open Sans", "Noto Sans CJK SC", sans-serif;
    font-size: 9px;
    line-height: 14px;
    color: #3c3c3c;
    overflow: hidden;
}
button, select, input {
    font: inherit;
    color: inherit;
    border: none;
    background: none;
    padding: 0;
    margin: 0;
}
button {
    display: flex;
    align-items: center;
    white-space: nowrap;
}
select {
    appearance: none;
    flex: 1;
    min-width: 0;
}
a {
    color: inherit;
    text-decoration: none;
}
h1, h2, h3, p {
    margin: 0;
    font-size: inherit;
    font-weight: normal;
}
svg {
    flex: none;
}
.app {
    display: flex;
    flex-direction: column;
    height: 100vh;
    background-color: #929292;
}
.spacer {
    flex: 1;
}
.caret, .caret-up, .arrow-right {
    flex: none;
    width: 0;
    height: 0;
    border: 3px solid transparent;
    border-top-color: #333;
    border-bottom-width: 0;
}
.caret.black {
    border-top-color: #111;
}
.caret.dim {
    border-width: 2px 2px 0;
    border-top-color: #444;
}
.caret.light {
    border-width: 2px 2px 0;
    border-top-color: #fff;
}
.caret-up {
    border: 3px solid transparent;
    border-bottom-color: #111;
    border-top-width: 0;
}
.arrow-right {
    border: 4px solid transparent;
    border-left: 5px solid #111;
    border-right-width: 0;
}

/* title bar */
.header {
    flex: none;
    display: grid;
    grid-template-columns: 30px 1fr;
    grid-template-rows: 18px 14px;
    background-color: #414141;
}
.app-btn {
    grid-row: 1 / 3;
    height: 30px;
    padding: 0 1px;
    background: linear-gradient(#c9c9c9, #6e6e6e);
    border: 1px solid #444;
}
.titlebar {
    display: flex;
    background-color: #ececec;
    min-width: 0;
}
.quick-access {
    display: flex;
    align-items: center;
    width: 287px;
    padding: 0 5px;
    gap: 4px;
    background: linear-gradient(#5c5c5c, #8a8a8a);
}
.quick-access .caret.black {
    margin-left: 3px;
}
.workspace {
    display: flex;
    align-items: center;
    flex: 1;
    height: 14px;
    gap: 3px;
    padding: 0 3px;
    border: 1px solid #a0a0a0;
    background-color: #858585;
    color: #e4e4e4;
}
.workspace .caret {
    border-top-color: #222;
}
.doc-title {
    flex: 1;
    padding-left: 11px;
    text-align: center;
    font-size: 12px;
    line-height: 18px;
}
.infocenter {
    display: flex;
    align-items: center;
    width: 325px;
    gap: 4px;
    padding: 0 3px;
    background: linear-gradient(#5c5c5c, #8a8a8a);
}
.infocenter input {
    width: 130px;
    height: 15px;
    padding: 0 2px;
    background-color: #f4f4f4;
    font-size: 8px;
    font-style: italic;
}
.infocenter input::placeholder {
    color: #777;
}
.infocenter .caret {
    border-width: 2px 2px 0;
    margin: 0 2px;
}
.login {
    gap: 4px;
    margin-left: 2px;
    color: #fff;
}
.sep {
    width: 1px;
    height: 14px;
    background-color: #666;
}
.help {
    justify-content: center;
    width: 12px;
    height: 12px;
    border: 1px solid #fff;
    border-radius: 50%;
    background-color: #3d6fb0;
    color: #fff;
    font-weight: bold;
}
.window-controls {
    display: flex;
    width: 90px;
    padding-right: 3px;
    justify-content: flex-end;
}
.window-controls button {
    width: 19px;
    height: 14px;
    justify-content: center;
}
.window-controls .close {
    width: 32px;
    background-color: #bdbdbd;
}

/* ribbon */
.ribbon-tabs {
    display: flex;
    align-items: flex-end;
    padding-left: 3px;
    color: #fff;
}
.ribbon-tabs a {
    padding: 0 7px;
    white-space: nowrap;
}
.ribbon-tabs .active {
    background-color: #ececec;
    color: #333;
}
.minimize-ribbon {
    height: 14px;
    gap: 4px;
    margin-left: 16px;
}
.ribbon {
    flex: none;
    display: flex;
    padding: 0 9px 0 1px;
    background-color: #8e8e8e;
    border-bottom: 1px solid #777;
}
.panel {
    display: flex;
    flex-direction: column;
    flex: none;
    border-right: 1px solid #c2c2c2;
    background-color: #fbfbfb;
}
.panel-body {
    display: flex;
    height: 59px;
    padding: 4px 4px 0;
    justify-content: space-between;
}
.panel-body.column {
    flex-direction: column;
    justify-content: flex-start;
    gap: 1px;
    padding: 4px 3px 0 2px;
}
.panel-title {
    position: relative;
    display: flex;
    justify-content: center;
    align-items: center;
    gap: 5px;
    height: 14px;
    background-color: #e9e9e9;
    border-top: 1px solid #d6d6d6;
}
.launcher {
    position: absolute;
    right: 5px;
    top: 5px;
}
.draw {
    width: 154px;
}
.modify {
    width: 167px;
}
.layers {
    width: 156px;
}
.annotate {
    width: 87px;
}
.block {
    width: 98px;
}
.properties {
    flex: 1;
}
.group {
    width: 50px;
}
.utilities {
    width: 73px;
}
.clipboard {
    width: 55px;
}
.big {
    flex-direction: column;
    justify-content: flex-start;
    height: 54px;
    line-height: 15px;
}
.big .caret, .stack .caret {
    border-width: 2px 2px 0;
}
.letter {
    height: 26px;
    padding: 0 4px;
    font-family: Roboto, sans-serif;
    font-size: 28px;
    line-height: 24px;
    font-weight: 500;
}
.stack {
    display: flex;
    flex-direction: column;
    gap: 1px;
}
.stack button {
    height: 17px;
    gap: 2px;
}
.stack button .caret {
    margin-left: auto;
}
.modify .stack .caret {
    margin-left: 6px;
}
.boxed {
    height: 17px;
    padding: 0 1px;
    border: 1px solid #dcdcdc;
    background-color: #f4f4f4;
}
.boxed.pressed {
    border-color: #5f93c6;
    background-color: #a9cdf2;
}
.draw .boxed {
    width: 26px;
}
.tool-row {
    display: flex;
    justify-content: space-between;
}
.combo {
    display: flex;
    align-items: center;
    flex: 1;
    max-height: 17px;
    padding: 0 4px 0 1px;
    gap: 2px;
    border: 1px solid #d4d4d4;
    background: linear-gradient(#fdfdfd, #efefef);
}
.prop-row {
    display: flex;
    align-items: center;
    gap: 1px;
    height: 17px;
}
.prop-row .combo {
    height: 17px;
}
.swatch {
    width: 11px;
    height: 12px;
    border: 1px solid #333;
    background-color: #fff;
}
.line-sample {
    width: 46px;
    height: 1px;
    background-color: #222;
}

/* file tabs */
.file-tabs {
    flex: none;
    display: flex;
    align-items: flex-end;
    height: 19px;
    padding-left: 14px;
    background: linear-gradient(#a2a2a2, #8c8c8c);
}
.file-tab {
    display: flex;
    align-items: center;
    justify-content: space-between;
    width: 94px;
    height: 17px;
    padding: 0 10px;
    border-radius: 6px 8px 0 0;
    background: linear-gradient(#dcdcdc, #c0c0c0);
    color: #222;
}
.new-tab {
    height: 17px;
    margin-left: 2px;
}

/* properties palette */
.workspace-area {
    flex: 1;
    display: flex;
    min-height: 0;
    gap: 4px;
    padding: 4px 2px 0 0;
    background-color: #6b6b6b;
}
.palette {
    display: flex;
    flex-direction: column;
    width: 185px;
    background-color: #9b9b9b;
}
.palette-title {
    height: 20px;
    padding-left: 6px;
    border-left: 3px double #666;
    font-size: 11px;
    line-height: 20px;
    color: #222;
}
.palette-body {
    flex: 1;
    display: flex;
    min-height: 0;
    padding: 0 8px 10px 1px;
    gap: 5px;
    border-radius: 4px 4px 0 0;
    background-color: #f0f0f0;
}
.palette-scroll {
    width: 7px;
    margin-top: 29px;
    background: linear-gradient(#b5b5b5 71%, #dedede 71%);
}
.palette-content {
    flex: 1;
    overflow: hidden;
    padding-top: 7px;
}
.selector {
    display: flex;
    height: 18px;
    margin: 0 0 5px 2px;
}
.selector button {
    width: 19px;
    justify-content: center;
    border: 1px solid #aaa;
    margin-left: -1px;
}
.selection {
    display: flex;
    flex: 1;
    align-items: center;
    margin-right: 4px;
    padding: 0 3px 0 1px;
    border: 1px solid #b4b4b4;
    background-color: #ececec;
}
.category {
    margin-bottom: 3px;
}
.category h3 {
    display: flex;
    align-items: center;
    justify-content: space-between;
    height: 16px;
    padding: 0 7px 0 4px;
    background: linear-gradient(#b4b4b4, #9c9c9c);
    color: #111;
    font-weight: bold;
}
.category table {
    width: 151px;
    margin-left: 12px;
    border-collapse: collapse;
    table-layout: fixed;
}
.category th, .category td {
    height: 15px;
    padding: 0 2px;
    border: 1px solid #a6a6a6;
    line-height: 14px;
    text-align: left;
    font-weight: normal;
    white-space: nowrap;
    color: #2c2c2c;
}
.category th {
    width: 68px;
    padding-left: 3px;
    background-color: #eee;
}
.category td {
    background-color: #fff;
}
.category .readonly {
    background-color: #efefef;
}
.mini-swatch {
    display: inline-block;
    width: 8px;
    height: 8px;
    margin-right: 4px;
    border: 1px solid #333;
    vertical-align: middle;
}
.mini-line {
    display: inline-block;
    width: 34px;
    height: 1px;
    margin: 0 4px 0 1px;
    background-color: #333;
    vertical-align: middle;
}

/* drawing window */
.drawing-window {
    flex: 1;
    display: flex;
    flex-direction: column;
    min-width: 0;
}
.canvas {
    flex: 1;
    position: relative;
    overflow: hidden;
    background-color: #202731;
    background-image:
        linear-gradient(90deg, #2d3741 1px, transparent 1px),
        linear-gradient(#2d3741 1px, transparent 1px),
        linear-gradient(90deg, #242c36 1px, transparent 1px),
        linear-gradient(#242c36 1px, transparent 1px);
    background-size: 141px 141px, 141px 141px, 28px 28px, 28px 28px;
    background-position: 105px 61px, 105px 61px, 21px 5px, 21px 5px;
}
.drawing {
    position: absolute;
    left: 0;
    top: 0;
}
.view-label {
    padding: 4px 2px;
    color: #e0e0e0;
}
.doc-controls {
    position: absolute;
    right: 7px;
    top: 7px;
    display: flex;
    gap: 7px;
}
.viewcube {
    position: absolute;
    right: 9px;
    top: 26px;
    display: grid;
    grid-template: 18px 34px 18px / 18px 34px 18px;
    place-items: center;
    color: #b4b8bd;
}
.viewcube::before {
    content: "";
    position: absolute;
    inset: 4px;
    border: 6px solid #454c56;
    border-radius: 50%;
}
.viewcube span {
    position: relative;
}
.viewcube .north, .viewcube .south {
    grid-column: 2;
}
.viewcube .north {
    align-self: start;
}
.viewcube .south {
    align-self: end;
}
.viewcube .west {
    grid-area: 2 / 1;
    justify-self: start;
}
.viewcube .east {
    grid-area: 2 / 3;
    justify-self: end;
}
.viewcube .top {
    grid-area: 2 / 2;
    width: 27px;
    height: 27px;
    background-color: #b0b0ae;
    color: #4a4f55;
    font-size: 16px;
    line-height: 27px;
    text-align: center;
}
.wcs {
    position: absolute;
    right: 27px;
    top: 108px;
    width: 35px;
    height: 12px;
    padding-left: 3px;
    border: 1px solid #8d909a;
    border-radius: 3px;
    background-color: #a3a5b0;
    color: #5a5d66;
}
.navbar {
    position: absolute;
    right: 2px;
    top: 139px;
    width: 24px;
    height: 155px;
    border-radius: 2px;
    background-color: #5d636a;
}
.dyn-prompt {
    position: absolute;
    left: 183px;
    top: 239px;
    display: flex;
    align-items: center;
    justify-content: space-between;
    width: 97px;
    height: 17px;
    padding: 0 1px;
    border: 1px solid #b8b8b8;
    background-color: #929292;
    color: #111;
}
.down-key {
    width: 9px;
    height: 9px;
    border: 1px solid #e8e8ff;
    background-color: #33399c;
    color: #fff;
    line-height: 7px;
    text-align: center;
}
.history {
    position: absolute;
    left: 44px;
    bottom: 0;
    font-family: "Liberation Mono", "Noto Sans CJK SC", monospace;
    color: #b4b6b8;
}
.history p {
    height: 15px;
    line-height: 15px;
    white-space: nowrap;
}
.history span {
    display: inline-block;
    height: 12px;
    line-height: 12px;
    background-color: #50555b;
}
.history .latest {
    color: #ececec;
}
.command-line {
    flex: none;
    display: flex;
    align-items: center;
    height: 20px;
    gap: 1px;
    background-color: #fff;
    border-bottom: 1px solid #777;
}
.command-tools {
    display: flex;
    align-items: center;
    width: 40px;
    height: 20px;
    gap: 7px;
    padding-left: 3px;
    background: linear-gradient(90deg, #6a6a6a, #999);
}
.grip {
    width: 3px;
    height: 13px;
    border-left: 3px dotted #aaa;
}
.command-line .caret {
    border-width: 2px 2px 0;
}
.prompt {
    padding-left: 5px;
    font-family: "Liberation Mono", "Noto Sans CJK SC", monospace;
    color: #111;
    white-space: nowrap;
}
.prompt button {
    display: inline-block;
    background-color: #d8d8d8;
}
.prompt em {
    font-style: normal;
    color: #2222d8;
}
.expand {
    margin-left: auto;
    margin-right: 327px;
}
.layout-tabs {
    flex: none;
    display: flex;
    align-items: center;
    height: 12px;
    background-color: #f0f0f0;
    color: #222;
    line-height: 12px;
}
.step {
    width: 10px;
    height: 12px;
    justify-content: center;
    border-right: 1px solid #bbb;
}
.layout-tabs a {
    padding: 0 4px;
}
.layout-tabs .active {
    margin-left: 3px;
    background-color: #111;
    color: #fff;
}

/* status bar and taskbar */
.status-bar {
    flex: none;
    display: flex;
    align-items: center;
    height: 17px;
    padding-right: 4px;
    border-top: 1px solid #555;
    background: linear-gradient(#8c8c8c, #a8a8a8);
}
.status-bar button {
    width: 16px;
    height: 15px;
    justify-content: center;
    border-right: 1px solid #7c7c7c;
    background-color: #b4b4b4;
}
.status-bar .on {
    background-color: #b9dde6;
}
.coords {
    width: 160px;
    padding-left: 104px;
    color: #777;
}
.taskbar {
    flex: none;
    height: 6px;
    background: linear-gradient(90deg, #9a7f70, #71594c 50%, #8d7060);
}
.taskbar svg {
    display: block;
}
.ime-bar {
    position: absolute;
    left: 0;
    bottom: 6px;
    display: flex;
    align-items: center;
    justify-content: space-between;
    width: 104px;
    height: 19px;
    padding: 0 4px 0 1px;
    background-color: #fff;
    color: #3448a4;
    font-size: 11px;
    font-weight: bold;
}

/* site logo */
.brand {
    position: absolute;
    right: 10px;
    bottom: 0;
    display: flex;
    align-items: center;
    width: 317px;
    height: 148px;
    padding: 8px 0 0 29px;
    gap: 1px;
    background-color: #fff;
    color: #0a0a0a;
}
.brand-text {
    display: flex;
    flex-direction: column;
    padding-top: 4px;
    font-style: italic;
    white-space: nowrap;
}
.brand strong {
    font-family: "Noto Sans CJK SC", sans-serif;
    font-size: 34px;
    font-weight: 900;
    line-height: 34px;
}
.brand span {
    font-size: 22px;
    font-weight: 600;
    line-height: 24px;
}
```
